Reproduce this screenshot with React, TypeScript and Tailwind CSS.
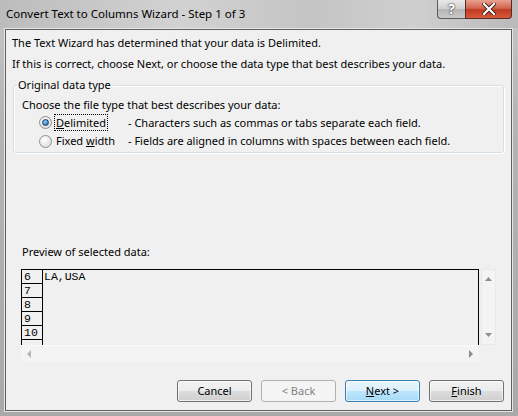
import React from "react";

const ui = "font-[family-name:'Noto_Sans',sans-serif]";
const mono = "font-[family-name:'Liberation_Mono','Courier_New',monospace]";

interface BtnProps {
  children: React.ReactNode;
  disabled?: boolean;
  focused?: boolean;
}

const WinButton = ({ children, disabled, focused }: BtnProps) => {
  if (disabled) {
    return (
      <div className="w-[75px] h-[22px] rounded-[3px] border border-[#adb2b5] bg-[#f4f4f4] flex items-center justify-center text-[11px] text-[#838383]">
        {children}
      </div>
    );
  }
  return (
    <div
      className={
        focused
          ? "w-[75px] h-[22px] rounded-[3px] border border-[#3c7fb1] bg-[linear-gradient(180deg,#eaf6fd_0%,#d9f0fc_50%,#bee6fd_51%,#a7d9f5_100%)] shadow-[inset_0_0_0_1px_rgba(255,255,255,0.6)] flex items-center justify-center text-[11px] text-black"
          : "w-[75px] h-[22px] rounded-[3px] border border-[#707070] bg-[linear-gradient(180deg,#f2f2f2_0%,#ebebeb_50%,#dddddd_51%,#cfcfcf_100%)] shadow-[inset_0_0_0_1px_rgba(255,255,255,0.7)] flex items-center justify-center text-[11px] text-black"
      }
    >
      {children}
    </div>
  );
};

const Radio = ({ checked }: { checked?: boolean }) => (
  <div className="w-[13px] h-[13px] rounded-full border border-[#8e8f8f] bg-[radial-gradient(circle_at_40%_35%,#ffffff,#d4d4d4)] flex items-center justify-center">
    {checked && (
      <div className="w-[7px] h-[7px] rounded-full bg-[radial-gradient(circle_at_40%_35%,#8ad3fb,#1a5a9c)] border border-[#1b3f6c]" />
    )}
  </div>
);

export default function App() {
  const rows = ["6", "7", "8", "9", "10"];

  return (
    <div className={`${ui} w-[518px] h-[416px] flex flex-col bg-[linear-gradient(180deg,#c6c6c6_0%,#b4b4b4_30%,#a9a9a9_100%)] overflow-hidden`}>
      {/* Title bar */}
      <div className="h-[28px] flex items-start bg-[linear-gradient(90deg,#bcbcbc_0%,#d2d2d2_35%,#c4c4c4_60%,#cfcfcf_80%,#bababa_100%)]">
        <div className="pl-[6px] pt-[6px] text-[11.5px] leading-[16px] text-black">
          Convert Text to Columns Wizard - Step 1 of 3
        </div>
        <div className="ml-auto mr-[6px] flex">
          <div className="w-[28px] h-[19px] rounded-bl-[4px] border border-t-0 border-r-0 border-[#5a5a5a] bg-[linear-gradient(180deg,#e9e9e9_0%,#cfcfcf_50%,#b5b5b5_51%,#c9c9c9_100%)] flex items-center justify-center text-[14px] font-bold leading-none text-white [text-shadow:0_0_2px_#333,0_0_1px_#333]">
            ?
          </div>
          <div className="w-[47px] h-[19px] rounded-br-[4px] border border-t-0 border-[#5a2a24] bg-[linear-gradient(180deg,#e7a291_0%,#d2654f_45%,#c13a22_55%,#d65a3c_100%)] flex items-center justify-center">
            <svg width="14" height="12" viewBox="0 0 14 12">
              <path d="M2 1 L12 11 M12 1 L2 11" stroke="#3a1a14" strokeWidth="4" strokeLinecap="square" />
              <path d="M2 1 L12 11 M12 1 L2 11" stroke="#ffffff" strokeWidth="2.2" strokeLinecap="square" />
            </svg>
          </div>
        </div>
      </div>

      {/* Client area */}
      <div className="ml-[4px] w-[509px] h-[384px] border border-[#e6e6e6]">
        <div className="w-full h-full border border-[#5f5f5f] bg-[#f0f0f0] text-[11px] text-black flex flex-col">
          <div className="mt-[5px] ml-[6px] h-[16px] leading-[16px]">
            The Text Wizard has determined that your data is Delimited.
          </div>
          <div className="mt-[5px] ml-[6px] h-[16px] leading-[16px]">
            If this is correct, choose Next, or choose the data type that best describes your data.
          </div>

          {/* Group box */}
          <fieldset className="mt-[5px] ml-[7px] w-[491px] h-[76px] border border-[#d5dfe5] rounded-[3px] shadow-[inset_1px_1px_0_#ffffff,1px_1px_0_#ffffff] pl-[2px]">
            <legend className="px-[2px] h-[16px] leading-[16px]">Original data type</legend>
            <div className="mt-[4px] ml-[6px] h-[16px] leading-[16px]">
              Choose the file type that best describes your data:
            </div>
            <div className="mt-[1px] flex items-center h-[17px]">
              <div className="ml-[23px]">
                <Radio checked />
              </div>
              <div className="ml-[2px] w-[74px]">
                <span className="inline-block border border-dotted border-black px-[1px] leading-[15px]">
                  <span className="underline">D</span>elimited
                </span>
              </div>
              <div className="leading-[16px]">- Characters such as commas or tabs separate each field.</div>
            </div>
            <div className="mt-[2px] flex items-center h-[16px]">
              <div className="ml-[23px]">
                <Radio />
              </div>
              <div className="ml-[2px] w-[74px] pl-[2px] leading-[16px]">
                Fixed <span className="underline">w</span>idth
              </div>
              <div className="leading-[16px]">- Fields are aligned in columns with spaces between each field.</div>
            </div>
          </fieldset>

          <div className="mt-[91px] ml-[16px] h-[16px] leading-[16px]">Preview of selected data:</div>

          {/* Preview */}
          <div className="mt-[9px] ml-[15px] flex">
            <div className="w-[458px] flex flex-col">
              <div className="h-[76px] border-t border-r border-black flex overflow-hidden">
                <div className="w-[22px] border-l border-r border-black shrink-0">
                  {rows.map((r) => (
                    <div key={r} className={`${mono} h-[14px] border-b border-black pl-[2px] text-[11.5px] leading-[14px]`}>
                      {r}
                    </div>
                  ))}
                </div>
                <div className={`${mono} pl-[1px] text-[11.5px] leading-[14px]`}>LA,USA</div>
              </div>
              <div className="h-[17px] bg-[#f4f4f4] border-t border-[#fafafa] flex items-center justify-between px-[6px]">
                <svg width="5" height="8" viewBox="0 0 5 8">
                  <path d="M4 0 L0 4 L4 8 Z" fill="#b5b5b5" />
                </svg>
                <svg width="5" height="8" viewBox="0 0 5 8">
                  <path d="M1 0 L5 4 L1 8 Z" fill="#8d8d8d" />
                </svg>
              </div>
            </div>
            <div className="ml-[2px] w-[15px] h-[76px] bg-[#f4f4f4] border border-[#e9e9e9] flex flex-col items-center justify-between py-[7px]">
              <svg width="7" height="4" viewBox="0 0 7 4">
                <path d="M0 4 L3.5 0 L7 4 Z" fill="#8d8d8d" />
              </svg>
              <svg width="7" height="4" viewBox="0 0 7 4">
                <path d="M0 0 L3.5 4 L7 0 Z" fill="#8d8d8d" />
              </svg>
            </div>
          </div>

          {/* Buttons */}
          <div className="mt-[18px] mr-[7px] flex justify-end gap-[9px]">
            <WinButton>Cancel</WinButton>
            <WinButton disabled>&lt; Back</WinButton>
            <WinButton focused>
              <span>
                <span className="underline">N</span>ext &gt;
              </span>
            </WinButton>
            <WinButton>
              <span>
                <span className="underline">F</span>inish
              </span>
            </WinButton>
          </div>
        </div>
      </div>
    </div>
  );
}
